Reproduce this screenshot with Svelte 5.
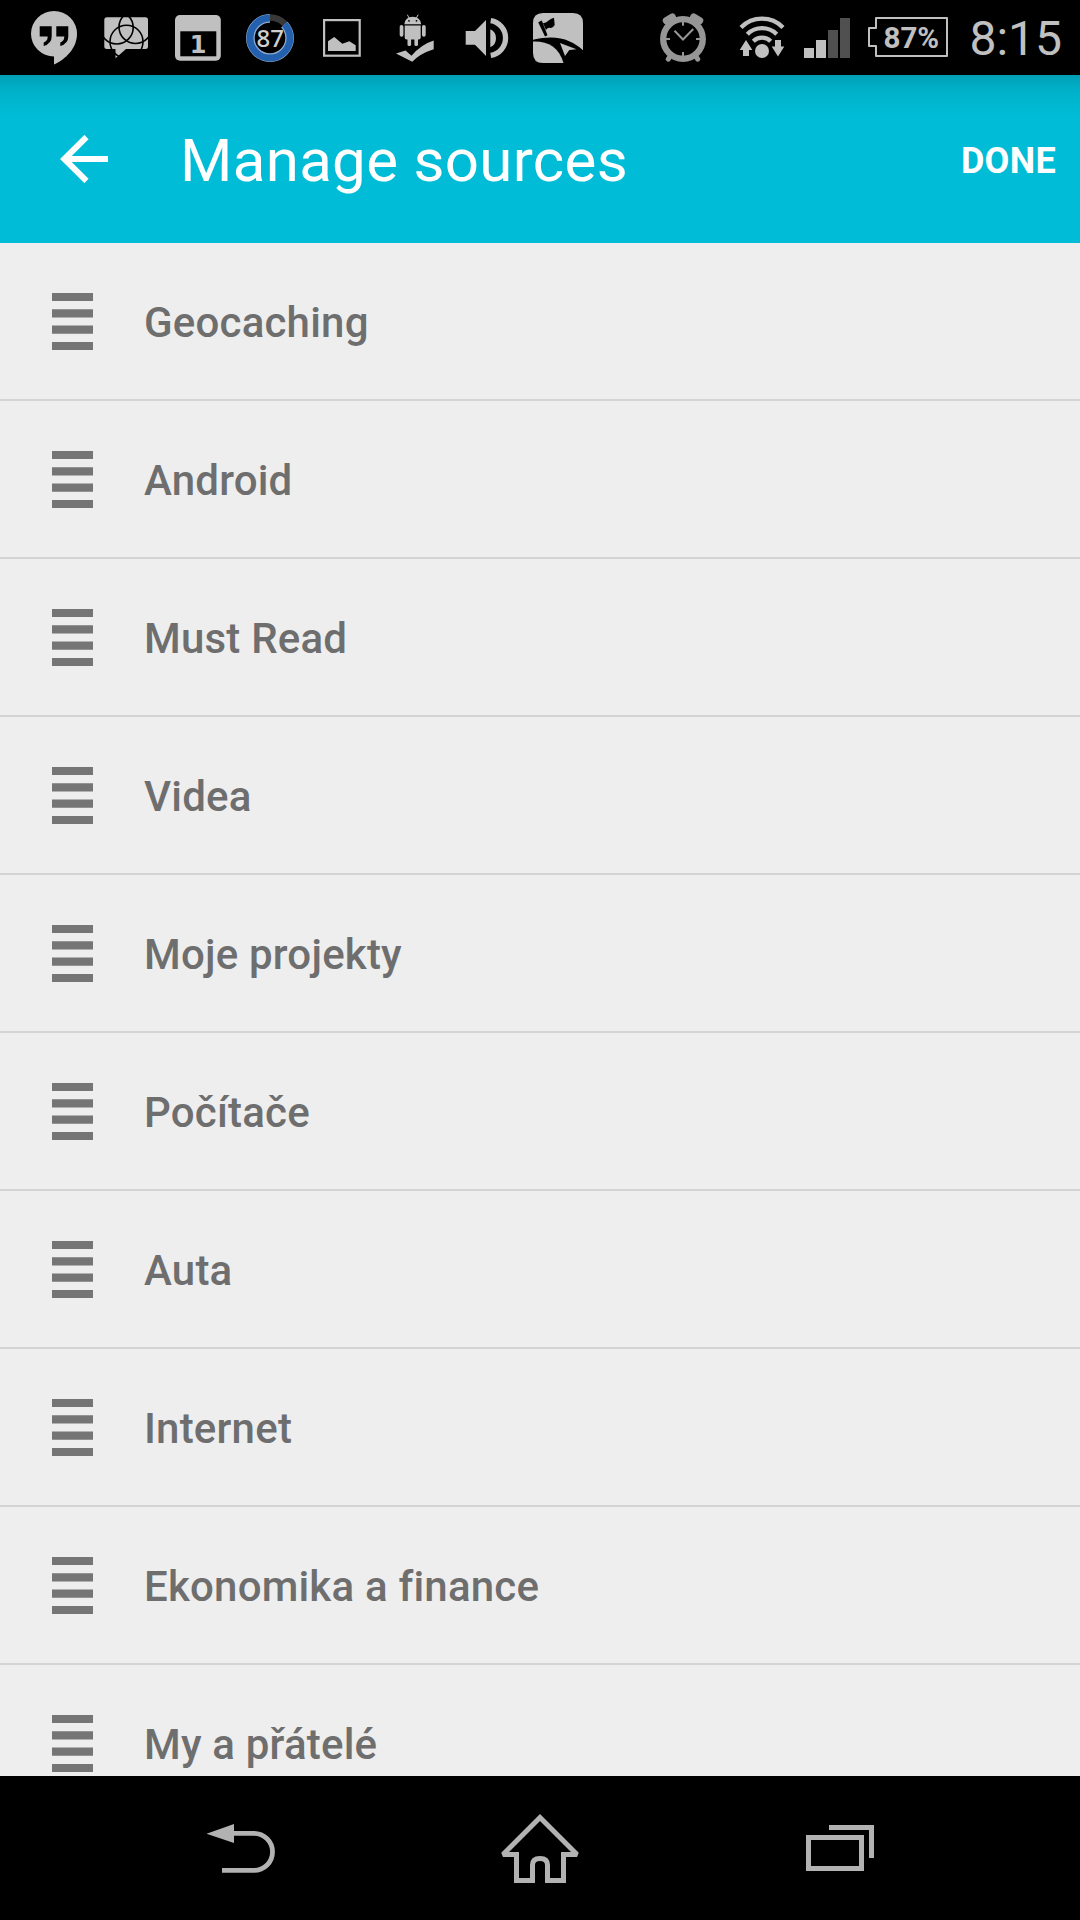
<script>
  let sources = $state([
    'Geocaching',
    'Android',
    'Must Read',
    'Videa',
    'Moje projekty',
    'Počítače',
    'Auta',
    'Internet',
    'Ekonomika a finance',
    'My a přátelé'
  ]);

  const battery = 87;
  const time = '8:15';
</script>

<div class="screen">
  <div class="status">
    <div class="notifications">
      <!-- hangouts -->
      <svg width="72" height="75" viewBox="0 0 72 75">
        <path fill="#c0c0c0" d="M36 11a23 22.6 0 0 1 23 23c0 14-11 25-23 30.6V56.4A23 22.7 0 1 1 36 11z" />
        <path d="M21.7 26.3h12v10.2q0 7-8 9.6v-3.6q4-1.5 4-6h-8zM38.3 26.3h12v10.2q0 7-8 9.6v-3.6q4-1.5 4-6h-8z" />
      </svg>
      <!-- chat -->
      <svg width="72" height="75" viewBox="0 0 72 75">
        <path fill="#c0c0c0" d="M17 17.3h38.5q2.500 0 2.500 2.500v26.700q0 2.500-2.500 2.500H36L25.500 58.300V49H17q-2.700 0-2.700-2.500V19.800q0-2.500 2.700-2.500z" />
        <g fill="none" stroke="#000" stroke-width="1.6">
          <circle cx="26.7" cy="27.5" r="16.5" />
          <circle cx="45.5" cy="27" r="16.5" />
          <circle cx="36.5" cy="41.7" r="16.5" />
        </g>
      </svg>
      <!-- calendar -->
      <svg width="72" height="75" viewBox="0 0 72 75">
        <rect x="13" y="15" width="45.8" height="45.8" rx="5" fill="#c0c0c0" />
        <rect x="18.3" y="31.3" width="36" height="25" />
        <text class="day" x="36" y="52.5" text-anchor="middle">1</text>
      </svg>
      <!-- battery gauge -->
      <svg width="72" height="75" viewBox="0 0 72 75">
        <g fill="none" transform="rotate(-90 36 38)">
          <circle cx="36" cy="38" r="20.6" stroke="#383838" stroke-width="6.5" />
          <circle cx="36" cy="38" r="19.6" stroke="#8fabd0" stroke-width="8.6" pathLength="100" stroke-dasharray="87 13" stroke-dashoffset="-13" />
          <circle cx="36" cy="38" r="20" stroke="#2360ae" stroke-width="6.800" pathLength="100" stroke-dasharray="87 13" stroke-dashoffset="-13" />
        </g>
        <text class="gauge" x="36.3" y="47.3" text-anchor="middle">{battery}</text>
      </svg>
      <!-- picture -->
      <svg width="72" height="75" viewBox="0 0 72 75">
        <rect x="18.1" y="20.1" width="35.6" height="35.6" fill="none" stroke="#c0c0c0" stroke-width="2.2" />
        <path fill="#c0c0c0" d="M22 41.3L28.300 37 36.300 43.700 43.300 41.300 49.700 45.300V51H22z" />
      </svg>
      <!-- android with check -->
      <svg width="72" height="75" viewBox="0 0 72 75">
        <g fill="#c0c0c0">
          <path d="M26.3 24.300q.8-7.500 8.400-7.500t8.500 7.500z" />
          <path d="M26.700 25.500h16v12q0 2-2 2h-12q-2 0-2-2z" />
          <rect x="21.7" y="25" width="3.7" height="11.7" rx="1.8" />
          <rect x="44" y="25" width="3.7" height="11.7" rx="1.8" />
          <rect x="29.5" y="37" width="3.6" height="9" rx="1.6" />
          <rect x="36.4" y="37" width="3.6" height="9" rx="1.6" />
          <path d="M18 53.600l9.500-3 6 5.200Q43 44.500 55.700 40.500v8.700Q42 53.500 34.300 61.700z" />
        </g>
        <path stroke="#c0c0c0" d="M29.300 14.700l2 3.600M40.200 14.700l-2 3.600" />
        <circle cx="31" cy="20.8" r=".9" />
        <circle cx="38.5" cy="20.8" r=".9" />
      </svg>
      <!-- volume -->
      <svg width="72" height="75" viewBox="0 0 72 75">
        <path fill="#c0c0c0" d="M15.700 31H25L36 20v36L25 44.700h-9.300zM40.300 29.200q5.700 2.300 5.700 9t-5.700 9z" />
        <path fill="none" stroke="#c0c0c0" stroke-width="5.3" d="M40.700 20.700a17.500 17.500 0 0 1 0 34.600" />
      </svg>
      <!-- geocaching -->
      <svg width="72" height="75" viewBox="0 0 72 75">
        <g fill="#c0c0c0">
          <path d="M11 39.800V23q0-10 10-10h30q10 0 10 10v27.300C50 40.500 36 34 11 39.800z" />
          <path d="M11 41.500C26 41 37 47 41.500 63H21q-10 0-10-10z" />
          <path d="M38 43l16.500 6.300-7.200.6-4.300 6z" />
        </g>
        <path d="M16.200 22.300l3.600-1.700 5.700 14.700-2.500 1.200zM21 23q2.500.5 5-2t6-3.300l.7 7.300q-2 3.500-4.500 2.900t-4.200 2z" />
      </svg>
    </div>

    <div class="system">
      <!-- alarm -->
      <svg width="72" height="75" viewBox="0 0 72 75">
        <g stroke="#969696" fill="none">
          <circle cx="36" cy="39" r="19.8" stroke-width="6.3" />
          <path stroke-width="7.5" stroke-linecap="round" d="M19.500 20.700l5.800-3.400M52.500 20.700l-5.800-3.400" />
          <path stroke-width="5" stroke-linecap="round" d="M23 56.500l-1.700 2.700M49 56.500l1.700 2.700" />
          <path stroke-width="2" d="M36 20v5.700M36 52v6M17 39h6M49 39h6" />
          <path stroke-width="2" d="M27.500 30.700l8.500 8.800L46.300 29" />
        </g>
      </svg>
      <!-- wifi -->
      <svg class="wifi" width="72" height="75" viewBox="0 0 72 75">
        <g fill="none" stroke="#c0c0c0" stroke-width="4.3">
          <path d="M15 27.500a29.500 29.500 0 0 1 42 0" />
          <path d="M21.300 34.200a21 21 0 0 1 29.400 0" />
          <path d="M27.300 41.200a12.500 12.500 0 0 1 17.400 0" />
        </g>
        <g fill="#c0c0c0">
          <circle cx="36" cy="51" r="7" />
          <path d="M20 40l6.300 10H23v6h-6v-6h-3.300zM52 56.500l-6.300-10H49v-6.500h6v6.500h3.300z" />
        </g>
      </svg>
      <!-- signal -->
      <svg class="signal" width="46" height="75" viewBox="0 0 46 75">
        <path fill="#c0c0c0" d="M0 48h10v10H0zM12 40h10v18H12z" />
        <path fill="#505050" d="M24 30h10v28H24zM36 18h10v40H36z" />
      </svg>
      <svg class="battery" width="82" height="75" viewBox="0 0 82 75">
        <path fill="none" stroke="#c0c0c0" stroke-width="2" stroke-linejoin="round" d="M9 18h71v38H9V46H2V28h7z" />
        <text class="percent" x="44.3" y="47.7" text-anchor="middle">{battery}%</text>
      </svg>
      <span class="time">{time}</span>
    </div>
  </div>

  <header>
    <svg width="48" height="48" viewBox="0 0 48 48">
      <path fill="none" stroke="#fff" stroke-width="6" d="M26.500 2L4.300 24l22.200 22M5 24h43" />
    </svg>
    <h1>Manage sources</h1>
    <button>DONE</button>
  </header>

  <ul>
    {#each sources as source}
      <li>
        <svg class="handle" width="41" height="57" viewBox="0 0 41 57">
          <path fill="#757575" d="M0 0h41v8H0zM0 16.300h41v8.100H0zM0 32.600h41v8.100H0zM0 49h41v8H0z" />
        </svg>
        <span>{source}</span>
      </li>
    {/each}
  </ul>

  <nav>
    <svg width="100" height="144" viewBox="0 0 100 144">
      <path fill="#b2b2b2" d="M16.500 57.700L44 48v19z" />
      <path fill="none" stroke="#b2b2b2" stroke-width="4.8" d="M43 57.400h21a18.500 18.500 0 0 1 0 37H32" />
    </svg>
    <svg width="100" height="144" viewBox="0 0 100 144">
      <path
        fill="none"
        stroke="#b2b2b2"
        stroke-width="5"
        stroke-miterlimit="2"
        d="M50 41.500L13 78.500h13.500v26h16V89q0-6.500 7.500-6.500t7.500 6.500v15.500h16v-26H87z"
      />
    </svg>
    <svg width="100" height="144" viewBox="0 0 100 144">
      <rect x="18.5" y="61.5" width="53" height="31" fill="none" stroke="#b2b2b2" stroke-width="5" />
      <path fill="none" stroke="#b2b2b2" stroke-width="5" d="M39 51.500h42.500V82" />
    </svg>
  </nav>
</div>

<style>
  :global(body) { margin: 0; background: #000; }
  .screen { display: flex; flex-direction: column; width: 1080px; height: 1920px; overflow: hidden; background: #eee; font-family: Roboto, sans-serif; }
  svg { display: block; flex: none; }

  .status { display: flex; justify-content: space-between; height: 75px; flex: none; padding: 0 18px; background: #000; color: #c0c0c0; }
  .notifications, .system { display: flex; }
  .wifi { margin-left: 7px; }
  .signal { margin-left: 6px; }
  .battery { margin-left: 17px; }
  .time { margin-left: 20px; font-size: 48px; line-height: 78px; }
  .day { font: bold 24px "DejaVu Sans", sans-serif; fill: #c0c0c0; }
  .gauge { font: 500 24px "Noto Sans", sans-serif; fill: #d0d0d0; }
  .percent { font: 700 29.5px Roboto, sans-serif; fill: #c0c0c0; }

  header { display: flex; align-items: center; height: 168px; flex: none; box-sizing: border-box; padding: 0 24px 0 60px; background: linear-gradient(#009fb5, #00b0c8 14px, #00bcd6 40px); color: #fff; }
  h1 { flex: 1; margin: 3px 0 0 72px; font-size: 60px; font-weight: 400; line-height: 72px; letter-spacing: 0.33px; }
  button { margin-top: 4px; padding: 0; border: 0; background: none; color: #fff; font: 700 36px/44px Roboto, sans-serif; letter-spacing: 0.3px; }

  ul { flex: 1; min-height: 0; margin: 0; padding: 0; overflow: hidden; list-style: none; }
  li { display: flex; align-items: center; height: 158px; box-sizing: border-box; padding-left: 52px; border-bottom: 2px solid #d4d4d4; color: #6e6e6e; font-size: 42px; font-weight: 500; letter-spacing: 0.2px; }
  li span { margin: 2px 0 0 51px; }

  nav { display: flex; justify-content: space-between; height: 144px; flex: none; padding: 0 190px; background: #000; }
</style>
